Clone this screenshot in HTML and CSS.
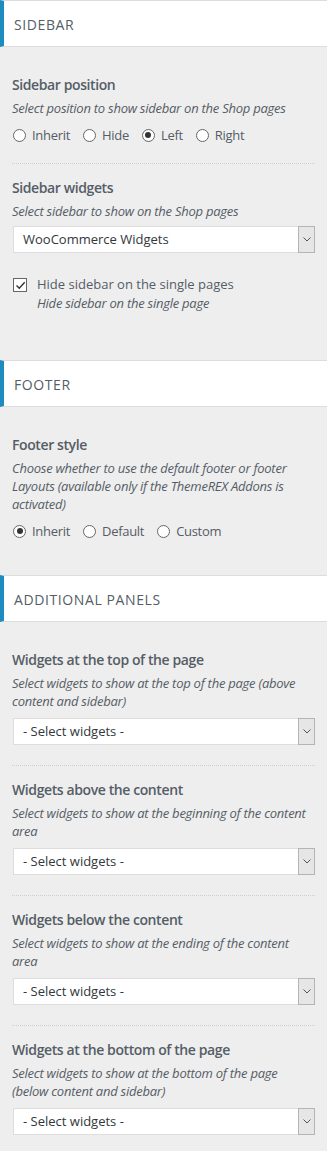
FILE: index.html
```html
<!DOCTYPE html>
<html lang="en">
<head>
    <meta charset="UTF-8">
    <meta name="viewport" content="width=device-width, initial-scale=1.0">
    <title>Customizer - Shop</title>
    <link rel="stylesheet" href="styles.css">
</head>
<body>
    <!-- Sidebar -->
    <div class="section-head first">Sidebar</div>
    <div class="section-body sidebar-body">
        <div class="control">
            <div class="control-title">Sidebar position</div>
            <div class="control-desc">Select position to show sidebar on the Shop pages</div>
            <div class="radios">
                <label class="radio"><span class="radio-dot"></span>Inherit</label>
                <label class="radio"><span class="radio-dot"></span>Hide</label>
                <label class="radio"><span class="radio-dot checked"></span>Left</label>
                <label class="radio"><span class="radio-dot"></span>Right</label>
            </div>
        </div>
        <div class="control">
            <div class="control-title">Sidebar widgets</div>
            <div class="control-desc">Select sidebar to show on the Shop pages</div>
            <div class="select compact">
                <span class="select-value">WooCommerce Widgets</span>
                <span class="select-arrow"><svg width="8" height="5" viewBox="0 0 8 5"><path d="M0.5 0.5 L4 4 L7.5 0.5" fill="none" stroke="#555" stroke-width="1"/></svg></span>
            </div>
            <div class="check-row">
                <span class="checkbox"><svg width="11" height="11" viewBox="0 0 11 11"><path d="M1.5 5.5 L4.3 8.3 L9.7 2.3" fill="none" stroke="#333" stroke-width="1.4"/></svg></span>
                <div>
                    <div class="check-label">Hide sidebar on the single pages</div>
                    <div class="control-desc">Hide sidebar on the single page</div>
                </div>
            </div>
        </div>
    </div>

    <!-- Footer -->
    <div class="section-head">Footer</div>
    <div class="section-body">
        <div class="control">
            <div class="control-title">Footer style</div>
            <div class="control-desc">Choose whether to use the default footer or footer Layouts (available only if the ThemeREX Addons is activated)</div>
            <div class="radios">
                <label class="radio"><span class="radio-dot checked"></span>Inherit</label>
                <label class="radio"><span class="radio-dot"></span>Default</label>
                <label class="radio"><span class="radio-dot"></span>Custom</label>
            </div>
        </div>
    </div>

    <!-- Additional panels -->
    <div class="section-head">Additional panels</div>
    <div class="section-body">
        <div class="control">
            <div class="control-title">Widgets at the top of the page</div>
            <div class="control-desc">Select widgets to show at the top of the page (above content and sidebar)</div>
            <div class="select">
                <span class="select-value">- Select widgets -</span>
                <span class="select-arrow"><svg width="8" height="5" viewBox="0 0 8 5"><path d="M0.5 0.5 L4 4 L7.5 0.5" fill="none" stroke="#555" stroke-width="1"/></svg></span>
            </div>
        </div>
        <div class="control">
            <div class="control-title">Widgets above the content</div>
            <div class="control-desc">Select widgets to show at the beginning of the content area</div>
            <div class="select">
                <span class="select-value">- Select widgets -</span>
                <span class="select-arrow"><svg width="8" height="5" viewBox="0 0 8 5"><path d="M0.5 0.5 L4 4 L7.5 0.5" fill="none" stroke="#555" stroke-width="1"/></svg></span>
            </div>
        </div>
        <div class="control">
            <div class="control-title">Widgets below the content</div>
            <div class="control-desc">Select widgets to show at the ending of the content area</div>
            <div class="select">
                <span class="select-value">- Select widgets -</span>
                <span class="select-arrow"><svg width="8" height="5" viewBox="0 0 8 5"><path d="M0.5 0.5 L4 4 L7.5 0.5" fill="none" stroke="#555" stroke-width="1"/></svg></span>
            </div>
        </div>
        <div class="control">
            <div class="control-title">Widgets at the bottom of the page</div>
            <div class="control-desc">Select widgets to show at the bottom of the page (below content and sidebar)</div>
            <div class="select">
                <span class="select-value">- Select widgets -</span>
                <span class="select-arrow"><svg width="8" height="5" viewBox="0 0 8 5"><path d="M0.5 0.5 L4 4 L7.5 0.5" fill="none" stroke="#555" stroke-width="1"/></svg></span>
            </div>
        </div>
    </div>
</body>
</html>
```

FILE: styles.css
```css
body {
    margin: 0;
    background: #eeeeee;
    font-family: "Open Sans", "Noto Sans", sans-serif;
    color: #555d66;
}
.section-head {
    background: #fff;
    border-top: 1px solid #dddddd;
    border-bottom: 1px solid #dddddd;
    border-left: 4px solid #1e8cbe;
    padding: 14px 10px 11px;
    font-size: 14px;
    line-height: 20px;
    text-transform: uppercase;
    letter-spacing: 0.6px;
    color: #555d66;
}
.section-body {
    padding: 28px 12px 16px;
}
.sidebar-body {
    padding-bottom: 28px;
}
.control {
    padding-bottom: 20px;
}
.control + .control {
    border-top: 1px dotted #cfcfcf;
    padding-top: 14px;
}
.control-title {
    font-size: 14px;
    font-weight: 600;
    line-height: 20px;
    letter-spacing: -0.4px;
    margin-bottom: 4px;
}
.control-desc {
    font-size: 13px;
    font-style: italic;
    line-height: 18px;
    letter-spacing: -0.25px;
}
.radios {
    display: flex;
    gap: 12px;
    margin-top: 8px;
    margin-bottom: -2px;
    font-size: 13px;
    line-height: 20px;
    letter-spacing: -0.3px;
}
.radio {
    display: flex;
    align-items: center;
    gap: 6px;
}
.radio-dot {
    width: 11px;
    height: 11px;
    margin-left: 1px;
    border: 1px solid #666;
    border-radius: 50%;
    background: #fff;
    display: flex;
    align-items: center;
    justify-content: center;
}
.radio-dot.checked::after {
    content: "";
    width: 6px;
    height: 6px;
    border-radius: 50%;
    background: #333;
}
.select {
    display: flex;
    height: 25px;
    margin-top: 8px;
    margin-left: 1px;
    border: 1px solid #dddddd;
    background: #fff;
}
.select.compact {
    margin-top: 6px;
}
.select-value {
    flex: 1;
    padding-left: 9px;
    font-size: 13px;
    line-height: 25px;
    color: #32373c;
}
.select-arrow {
    width: 15px;
    border: 1px solid #b4b4b4;
    margin: -1px -1px -1px 0;
    background: #e6e6e6;
    display: flex;
    align-items: center;
    justify-content: center;
}
.check-row {
    display: flex;
    gap: 10px;
    margin-top: 21px;
}
.checkbox {
    width: 12px;
    height: 12px;
    margin: 4px 0 0 1px;
    border: 1px solid #666;
    background: #fff;
    display: flex;
    align-items: center;
    justify-content: center;
}
.check-label {
    font-size: 13px;
    line-height: 20px;
}
```
